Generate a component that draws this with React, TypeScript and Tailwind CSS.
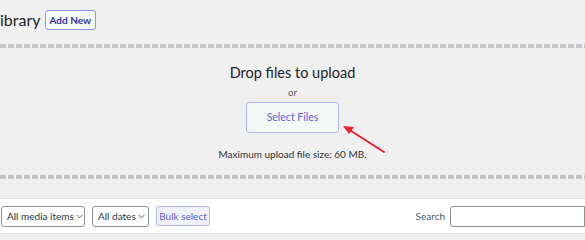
import { ChevronDown } from 'lucide-react';

const dashes =
  'h-[4px] w-full bg-[repeating-linear-gradient(90deg,#c3c4c7_0px,#c3c4c7_6px,transparent_6px,transparent_8px)]';

const SelectBox = ({ label, width }: { label: string; width: string }) => (
  <div
    className={`flex h-[21px] items-center justify-between whitespace-nowrap rounded-[3px] border border-[#8c8f94] bg-white pl-[5px] pr-[4px] text-[10px] text-[#2c3338] ${width}`}
  >
    <span>{label}</span>
    <ChevronDown size={11} strokeWidth={2} className="shrink-0 text-[#50575e]" />
  </div>
);

export default function App() {
  return (
    <div
      className="relative h-[240px] w-[585px] overflow-hidden bg-[#f0f0f1]"
      style={{ fontFamily: 'Lato, "Noto Sans", sans-serif' }}
    >
      {/* heading */}
      <div className="flex h-[44px] items-start pt-[8px]">
        <h1 className="text-[16px] leading-[24px] text-[#1d2327]">ibrary</h1>
        <button className="ml-[4px] mt-[2px] h-[20px] whitespace-nowrap rounded-[3px] border border-[#8e92f0] bg-[#f6f7f7] px-[4px] text-[10px] font-bold leading-[18px] text-[#3037a6]">
          Add New
        </button>
      </div>

      {/* drop zone */}
      <div className={dashes} />
      <div className="flex h-[127px] flex-col items-center">
        <h2 className="mt-[15px] text-[14.5px] leading-[20px] text-[#1d2327]">Drop files to upload</h2>
        <p className="mt-[4px] text-[9.5px] leading-[12px] text-[#50575e]">or</p>
        <button className="mt-[3px] h-[31px] w-[93px] rounded-[3px] border border-[#b2b5f2] bg-[#f6f7f7] text-[10.5px] text-[#5b63d8]">
          Select Files
        </button>
        <p className="mt-[15px] text-[10px] leading-[12px] text-[#2c3338]">Maximum upload file size: 60 MB.</p>
      </div>
      <div className={dashes} />

      {/* toolbar */}
      <div className="mt-[19px] flex h-[36px] items-center border-y border-[#dcdcde] bg-white pl-[1px]">
        <SelectBox label="All media items" width="w-[84px]" />
        <div className="ml-[7px]">
          <SelectBox label="All dates" width="w-[57px]" />
        </div>
        <button className="ml-[7px] h-[20px] w-[54px] whitespace-nowrap rounded-[3px] border border-[#b2b5f2] bg-[#f1f1fc] text-[10px] text-[#5b63d8]">
          Bulk select
        </button>
        <span className="ml-auto text-[10px] text-[#50575e]">Search</span>
        <div className="ml-[5px] h-[21px] w-[135px] rounded-l-[3px] border border-[#8c8f94] bg-white" />
      </div>

      {/* red annotation arrow */}
      <svg className="absolute left-[338px] top-[118px]" width="52" height="40" viewBox="0 0 52 40">
        <line x1="46" y1="34" x2="10" y2="11" stroke="#e8202a" strokeWidth="2" strokeLinecap="round" />
        <polygon points="5,8 16,9 11,16" fill="#e8202a" />
      </svg>
    </div>
  );
}
